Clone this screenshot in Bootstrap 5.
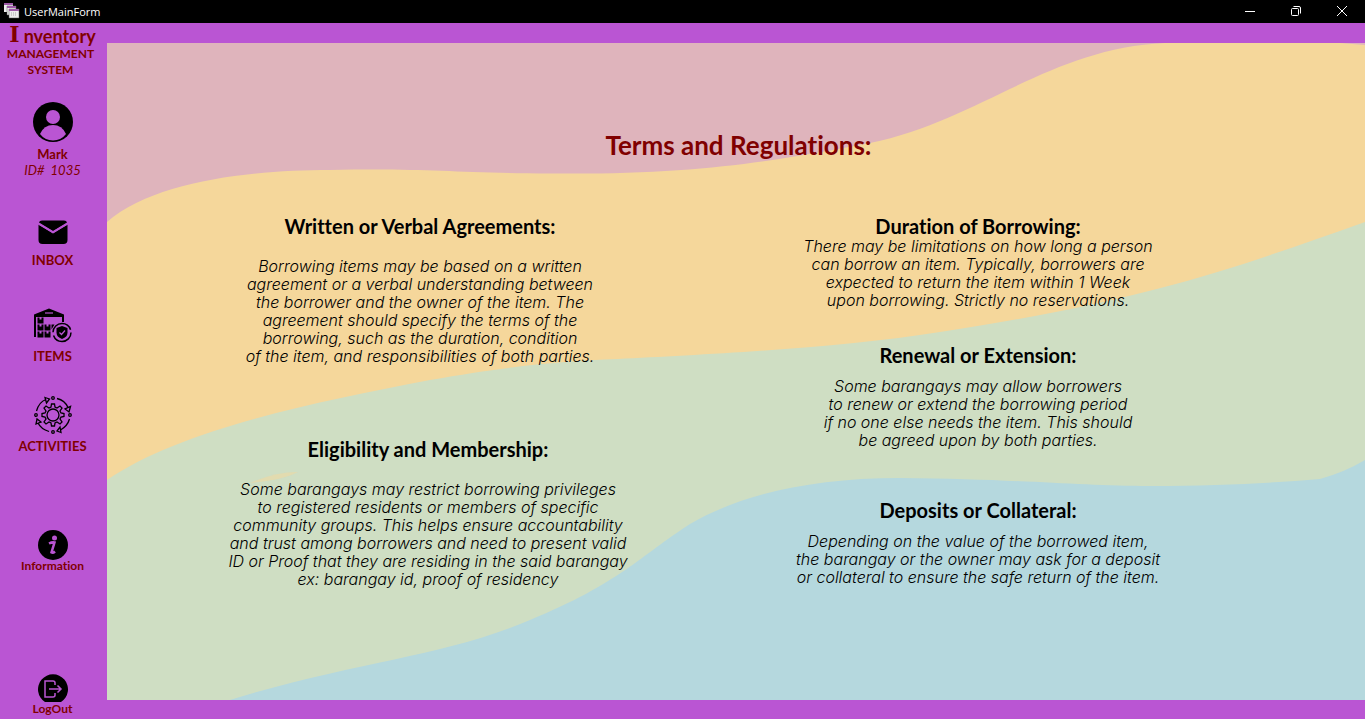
<!DOCTYPE html>
<html lang="en">
<head>
<meta charset="utf-8">
<meta name="viewport" content="width=device-width, initial-scale=1">
<title>UserMainForm</title>
<link href="https://cdn.jsdelivr.net/npm/bootstrap@5.3.0/dist/css/bootstrap.min.css" rel="stylesheet">
<style>
  body { background: #ba55d3; color: #000; font-family: Lato, sans-serif; font-variant-ligatures: none; }
  .titlebar { background: #000; color: #fff; height: 23px; font: 11px/23px "Open Sans", sans-serif; }
  .titlebar button { width: 46px; height: 22px; background: none; border: 0; padding: 0; color: #fff; display: flex; align-items: center; justify-content: center; }
  .side { width: 107px; padding-right: 2px; color: #800000; text-align: center; font-weight: 700; font-size: 13px; line-height: 16px; }
  .side a { color: inherit; text-decoration: none; display: flex; flex-direction: column; align-items: center; }
  .side svg { color: #000; flex: none; }
  .brand-block { font-size: 12px; }
  .brand-name { font-size: 18px; line-height: 18px; padding-top: 4px; height: 22px; margin-bottom: -3px; }
  .brand-cap { font: 700 22px/15px "DejaVu Serif", serif; }
  .id-no { font-weight: 400; font-style: italic; font-size: 13px; }
  .minor { font-size: 12px; line-height: 12px; }
  .inbox-link { margin-top: 42px; }
  .stage { margin: 20px 0 19px; isolation: isolate; }
  .waves { z-index: -1; }
  .stage h1 { color: #800000; font-size: 26px; line-height: 32px; font-weight: 700; margin: 0; padding: 86px 0 54px 5px; }
  .stage h2 { font-size: 20px; line-height: 22px; font-weight: 700; margin: 0; }
  .stage p { font-family: Inter, sans-serif; font-size: 16px; line-height: 18px; font-weight: 300; font-style: italic; margin: 0; white-space: nowrap; }
  .terms { padding-left: 34px; padding-right: 108px; }
  .stage .gap-lg { padding-top: 20px; }
  .stage .gap-sm { padding-top: 11px; }
  .eligibility { margin-top: 73px; }
  .renewal { margin-top: 35px; }
  .deposits { margin-top: 50px; }
</style>
</head>
<body>
<div class="d-flex flex-column min-vh-100">
  <header class="titlebar d-flex">
    <svg class="ms-1" width="16" height="22" viewBox="0 0 16 22"><path d="M0 3h9v9H0z" fill="#eee"/><path d="M0 3h9v2H0z" fill="#9b59a5"/><path d="M3 6h9v9H3z" fill="#eee" stroke="#555" stroke-width=".5"/><path d="M3 6h9v2H3z" fill="#9b59a5"/><path d="M5 9h10v9H5z" fill="#eee" stroke="#555" stroke-width=".5"/><path d="M5 9h10v2H5z" fill="#9b59a5"/><path d="M7 13h6M7 15h6" stroke="#aaa" stroke-dasharray="1 1"/></svg>
    <span class="ms-1">UserMainForm</span>
    <div class="d-flex ms-auto">
      <button type="button" aria-label="Minimize"><svg width="10" height="10"><path d="M0 5.5h10" stroke="#fff"/></svg></button>
      <button type="button" aria-label="Restore"><svg width="10" height="10" fill="none" stroke="#fff"><rect x=".5" y="2.500" width="7" height="7" rx="1"/><path d="M2.500 .5H8q1.500 0 1.500 1.500v5.500"/></svg></button>
      <button type="button" aria-label="Close"><svg width="10" height="10"><path d="M0 0l10 10M10 0L0 10" stroke="#fff"/></svg></button>
    </div>
  </header>
  <div class="d-flex flex-grow-1">
    <nav class="side d-flex flex-column flex-shrink-0" aria-label="Main">
      <div class="brand-block">
        <div class="brand-name d-flex justify-content-center"><span class="brand-cap me-1">I</span><span>nventory</span></div>
        <div class="pt-1 pe-1">MANAGEMENT<br>SYSTEM</div>
      </div>
      <a href="#profile" class="mt-4">
        <svg width="40" height="40" viewBox="0 0 40 40"><circle cx="20" cy="20" r="20"/><circle cx="20" cy="15" r="7" fill="#ba55d3"/><path d="M7 32q4-9 13-9t13 9q-5 6.500-13 6.500T7 32z" fill="#ba55d3"/></svg>
        <span class="mt-1">Mark</span><span class="id-no">ID#&nbsp; 1035</span>
      </a>
      <a href="#inbox" class="inbox-link pb-4">
        <svg class="mb-2" width="30" height="24" viewBox="0 0 30 24"><path d="M1 2.500Q1.500.5 4 .5h22q2.500 0 3 2L15 11z"/><path d="M.5 4.500L15 13.500 29.500 4.500v15.500q0 4-4 4h-21q-4 0-4-4z"/><path d="M.5 3.700L15 12.300 29.500 3.700" fill="none" stroke="#ba55d3" stroke-width="1.800"/></svg>
        INBOX
      </a>
      <a href="#items" class="mt-3 pb-4">
        <svg class="mb-1" width="40" height="36" viewBox="0 0 40 36"><path d="M1 29V6.500L16 .5 31 6.500V14h-2V9H3v20z"/><path d="M12 5h8" stroke="#ba55d3" stroke-width="1.200"/><path d="M4.500 9.500h6v6h-6zM4.500 16.500h6v6h-6zM11.500 16.500h6v6h-6zM4.500 23.500h6v6h-6zM11.500 23.500h6v6h-6zM18.500 16.500h3l-3 5z"/><path d="M6.500 9v2.500h2V9M6.500 16v2.500h2V16M13.500 16v2.500h2V16M6.500 23v2.500h2V23M13.500 23v2.500h2V23" fill="#ba55d3"/><circle cx="29" cy="24.500" r="9" fill="none" stroke="#000" stroke-width="1.500" stroke-dasharray="25 3.300"/><path d="M29 18l5.500 2v4.500q0 4.500-5.500 6.500-5.500-2-5.500-6.500V20z"/><path d="M26.500 24.500l2 2 3.500-4" fill="none" stroke="#ba55d3" stroke-width="1.200"/></svg>
        ITEMS
      </a>
      <a href="#activities" class="mt-2 pb-5">
        <svg class="mb-1" width="38" height="38" viewBox="0 0 38 38" fill="none" stroke="#000" stroke-width="1.300"><circle cx="19" cy="19" r="6"/><path d="M17 11l.5-3h3l.5 3 2 1 3-2 2 2-2 3 1 2 3 .5v3l-3 .5-1 2 2 3-2 2-3-2-2 1-.5 3h-3l-.5-3-2-1-3 2-2-2 2-3-1-2-3-.5v-3l3-.5 1-2-2-3 2-2 3 2z"/><circle cx="19" cy="2" r="1.300"/><circle cx="19" cy="36" r="1.300"/><circle cx="2" cy="19" r="1.300"/><circle cx="36" cy="19" r="1.300"/><path d="M2.500 15Q5 6 12 3.500M23 2.500q8 2 11 9M35.500 23q-2 7-9 11M15 35.500Q7 33 4 27"/><path d="M11 1.500l4.500 1.500-3 4zM36.500 10.500L35 16l-4-3zM27 36.500L23 35l3-4zM2 28l1-5 4 3z"/></svg>
        ACTIVITIES
      </a>
      <a href="#information" class="minor mt-4 pt-1">
        <svg width="30" height="30" viewBox="0 0 30 30"><circle cx="15" cy="15" r="15"/><circle cx="16.500" cy="8" r="2.500" fill="#ba55d3"/><path d="M11 13.500q3-1.500 5.500-1l-3 10q1.500.8 3.500-1" fill="none" stroke="#ba55d3" stroke-width="2.500"/></svg>
        Information
      </a>
      <a href="#logout" class="minor mt-auto pb-1">
        <svg width="30" height="29" viewBox="0 0 30 29"><path d="M7 28A15 15 0 1 1 23 28z"/><path d="M17 11V9q0-2-2-2H7v16h8q2 0 2-2v-2M11 15h12M19.500 11.500L23 15l-3.500 3.500" fill="none" stroke="#ba55d3" stroke-width="1.500"/></svg>
        LogOut
      </a>
    </nav>
    <main class="stage position-relative flex-grow-1">
      <svg class="waves position-absolute top-0 start-0 w-100 h-100" viewBox="107 43 1258 657" preserveAspectRatio="none" aria-hidden="true">
        <path d="M107 43h1258v657H107z" fill="#dfb4bc"/>
        <path d="M107 222C155 180 255 170 330 170C430 168 450 173 550 173.500C700 175 780 160 870 143C980 120 1050 48 1165 43H1340L1365 45V700H107z" fill="#f5d79b"/>
        <path d="M107 480C180 430 310 403 430 380C510 366 560 361 618 359C700 355 840 348 940 332C1150 300 1240 266 1365 222V700H107z" fill="#cfdec3"/>
        <path d="M230 700C360 660 440 658 530 620C620 583 640 556 690 524C740 495 810 478 900 478C1020 479 1080 486 1150 486C1220 486 1270 483 1320 479Q1345 472 1365 460V700z" fill="#b5d8de"/>
        <path d="M250 483q25-11 48-11-15 8-48 11z" fill="#f5d79b" opacity=".5"/>
      </svg>
      <h1 class="text-center">Terms and Regulations:</h1>
      <div class="terms row g-0 text-center">
        <div class="col-6">
          <section>
            <h2>Written or Verbal Agreements:</h2>
            <p class="gap-lg">Borrowing items may be based on a written<br>agreement or a verbal understanding between<br>the borrower and the owner of the item. The<br>agreement should specify the terms of the<br>borrowing, such as the duration, condition<br>of the item, and responsibilities of both parties.</p>
          </section>
          <section class="eligibility ps-3">
            <h2>Eligibility and Membership:</h2>
            <p class="gap-lg">Some barangays may restrict borrowing privileges<br>to registered residents or members of specific<br>community groups. This helps ensure accountability<br>and trust among borrowers and need to present valid<br>ID or Proof that they are residing in the said barangay<br>ex: barangay id, proof of residency</p>
          </section>
        </div>
        <div class="col-6">
          <section>
            <h2>Duration of Borrowing:</h2>
            <p>There may be limitations on how long a person<br>can borrow an item. Typically, borrowers are<br>expected to return the item within 1 Week<br>upon borrowing. Strictly no reservations.</p>
          </section>
          <section class="renewal">
            <h2>Renewal or Extension:</h2>
            <p class="gap-sm">Some barangays may allow borrowers<br>to renew or extend the borrowing period<br>if no one else needs the item. This should<br>be agreed upon by both parties.</p>
          </section>
          <section class="deposits">
            <h2>Deposits or Collateral:</h2>
            <p class="gap-sm">Depending on the value of the borrowed item,<br>the barangay or the owner may ask for a deposit<br>or collateral to ensure the safe return of the item.</p>
          </section>
        </div>
      </div>
    </main>
  </div>
</div>
<script src="https://cdn.jsdelivr.net/npm/bootstrap@5.3.0/dist/js/bootstrap.bundle.min.js"></script>
</body>
</html>
